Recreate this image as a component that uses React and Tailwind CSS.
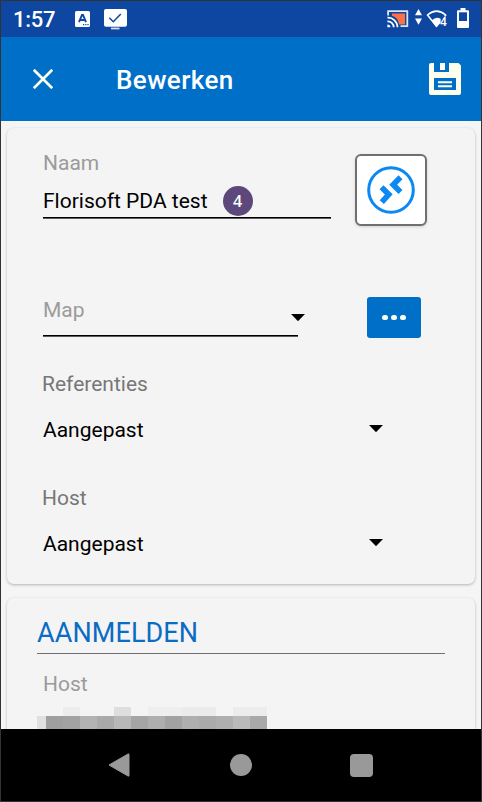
import React from 'react';

const censorTop = [
  [26, 'bg-transparent'], [17, 'bg-[#ececec]'], [34, 'bg-transparent'], [17, 'bg-[#dedede]'],
  [17, 'bg-transparent'], [34, 'bg-[#eeeeee]'], [34, 'bg-[#ebebeb]'], [17, 'bg-transparent'], [34, 'bg-[#ececec]'],
];
const censorBottom = [
  [9, 'bg-[#e0e0e0]'], [17, 'bg-[#9f9f9f]'], [17, 'bg-[#a2a2a2]'], [17, 'bg-[#b3b3b3]'], [17, 'bg-[#aaaaaa]'],
  [17, 'bg-[#b8b8b8]'], [17, 'bg-[#a5a5a5]'], [17, 'bg-[#aeaeae]'], [17, 'bg-[#a2a2a2]'], [17, 'bg-[#afafaf]'],
  [17, 'bg-[#ababab]'], [17, 'bg-[#afafaf]'], [17, 'bg-[#bababa]'], [17, 'bg-[#a9a9a9]'],
];

function Caret({ className }) {
  return (
    <svg className={className} width="14" height="7" viewBox="0 0 14 7">
      <path d="M0 0H14L7 7.2Z" fill="#000" />
    </svg>
  );
}

function Blocks({ cells, className }) {
  return (
    <div className={`flex ${className}`}>
      {cells.map(([w, color], i) => (
        <div key={i} className={color} style={{ width: w }} />
      ))}
    </div>
  );
}

function Underline({ className }) {
  return <div className={`h-[2px] border-b border-[#5a5a5a] bg-black ${className}`} />;
}

function StatusBar() {
  return (
    <div className="flex h-9 shrink-0 bg-[#0d47a1] text-white">
      <span className="ml-3 mt-[7px] w-[62px] text-[22px] leading-6 font-medium tracking-[-0.3px]">1:57</span>
      <svg className="mt-[10px]" width="15" height="16" viewBox="0 0 15 16">
        <rect width="15" height="16" rx="1.5" fill="#fff" />
        <path d="M4 11.2L7 4H8L11 11.2M5.2 9H9.8" fill="none" stroke="#0d47a1" strokeWidth="1.9" />
        <path d="M8 13.7h1.2M10.2 13.7h1.2M12.4 13.7h1.2" stroke="#0d47a1" strokeWidth="1.2" />
      </svg>
      <svg className="ml-[14px] mt-2" width="23" height="21" viewBox="0 0 23 21">
        <rect width="23" height="17.8" rx="2" fill="#fff" />
        <path d="M5.3 8.7L9.3 12.7L16.8 5" fill="none" stroke="#0d47a1" strokeWidth="1.5" />
        <path d="M7 19.5H15.5" stroke="#d5e0f2" strokeWidth="1.8" />
      </svg>
      <svg className="ml-[260px] mt-[9px]" width="22" height="18" viewBox="0 0 22 18">
        <path d="M5 3.5H18V14.5H12C11.5 9.5 9 7.2 5 5.8Z" fill="#ff7043" />
        <path d="M1.1 5.5V1.2H20.3V16.2H13.5" fill="none" stroke="#dce5f3" strokeWidth="1.8" />
        <path d="M.4 7.7A9.5 9.5 0 0 1 10.5 17.3M.4 11.3A6 6 0 0 1 6.7 17.3" fill="none" stroke="#fff" strokeWidth="1.7" />
        <path d="M.4 14.5A3 3 0 0 1 3.4 17.3H.4Z" fill="#fff" />
      </svg>
      <svg className="ml-1.5 mt-2" width="7" height="16" viewBox="0 0 7 16">
        <path d="M3.5 0L7 6.2H0ZM0 9.5H7L3.5 15.8Z" fill="#fff" />
      </svg>
      <div className="relative ml-1 mt-2 h-5 w-[22px]">
        <svg width="22" height="20" viewBox="0 0 22 20">
          <path d="M10.5 17.3L1.5 6Q10.5-1.8 19.7 6L18.6 7.5" fill="none" stroke="#fff" strokeWidth="1.5" />
          <path d="M10.5 18.5L5.6 11.5Q10 7.2 14.6 9.8V13.8Z" fill="#fff" />
        </svg>
        <span className="absolute left-[14px] top-[7px] text-[12px] leading-3 font-medium">4</span>
      </div>
      <svg className="ml-[9px] mt-[7px]" width="12" height="20" viewBox="0 0 12 20">
        <path d="M3.5 0H8.5V2.3H11Q12 2.3 12 3.3V19Q12 20 11 20H1Q0 20 0 19V3.3Q0 2.3 1 2.3H3.5Z" fill="#fff" />
        <path d="M2 4.3H10V13H2Z" fill="#0d47a1" />
      </svg>
    </div>
  );
}

function AppBar() {
  return (
    <div className="flex h-[84px] shrink-0 items-center bg-[#006fc8] text-white">
      <svg className="ml-8" width="20" height="20" viewBox="0 0 20 20">
        <path d="M.8 .8L19.2 19.2M19.2 .8L.8 19.2" stroke="#ffffee" strokeWidth="2.7" />
      </svg>
      <h1 className="ml-[63px] w-[313px] pt-0.5 text-[26px] leading-8 font-medium tracking-[0.4px]">Bewerken</h1>
      <svg width="32" height="32" viewBox="0 0 32 32">
        <path
          fillRule="evenodd"
          d="M2 0H5V9H20V0H29.5L32 2.5V30Q32 32 30 32H2Q0 32 0 30V2Q0 0 2 0ZM5 15V27H27V15Z"
          fill="#ffffee"
        />
        <path d="M11 0H16V7H11Z" fill="#ffffee" />
        <path d="M9 19.3H23M9 23.3H23" stroke="#ffffee" strokeWidth="2" />
      </svg>
    </div>
  );
}

function DetailsCard() {
  return (
    <section className="h-[456px] shrink-0 rounded-[7px] bg-[#f4f4f4] pl-9 text-[21px] leading-6 shadow-[0_1px_3px_rgba(0,0,0,0.27)]">
      <div className="flex h-[169px]">
        <div className="w-[288px] pt-[23px]">
          <div className="text-[#9b9b9b]">Naam</div>
          <div className="mt-[14px] flex h-6">
            <span className="w-[180px]">Florisoft PDA test</span>
            <span className="-mt-[3px] flex h-[30px] w-[30px] shrink-0 items-center justify-center rounded-full bg-[#5c487a] pr-px font-['Open_Sans'] text-[16px] font-semibold text-white">4</span>
          </div>
          <Underline className="mt-1" />
        </div>
        <div className="ml-6 mt-[26px] flex h-[72px] w-[72px] items-center justify-center rounded-md border-2 border-[#707070] bg-white shadow-[0_1px_3px_rgba(0,0,0,0.15)]">
          <svg width="48" height="48" viewBox="0 0 48 48">
            <circle cx="24" cy="24" r="22.3" fill="none" stroke="#0b88f2" strokeWidth="3" />
            <path d="M14.5 21.3L21.8 28.4L14.8 36.2M33.5 11.3L26.2 18.8L33.5 26" fill="none" stroke="#0b88f2" strokeWidth="5.6" />
          </svg>
        </div>
      </div>

      <div className="flex h-[75px] items-start">
        <div className="w-[262px]">
          <div className="flex h-[38px] justify-between">
            <span className="mt-px text-[#9b9b9b]">Map</span>
            <Caret className="mt-[17px]" />
          </div>
          <Underline className="w-[255px]" />
        </div>
        <button className="ml-[62px] flex h-[41px] w-[54px] items-center justify-center gap-[3.5px] rounded-[3px] bg-[#006fc8]">
          <span className="h-[5.5px] w-[5.5px] rounded-full bg-[#ffffee]" />
          <span className="h-[5.5px] w-[5.5px] rounded-full bg-[#ffffee]" />
          <span className="h-[5.5px] w-[5.5px] rounded-full bg-[#ffffee]" />
        </button>
      </div>

      {['Referenties', 'Host'].map((label) => (
        <div key={label} className="h-[114px]">
          <div className="-ml-px text-[#777777]">{label}</div>
          <div className="mt-[22px] flex w-[340px] justify-between">
            <span>Aangepast</span>
            <Caret className="mt-[7px]" />
          </div>
        </div>
      ))}
    </section>
  );
}

function LoginCard() {
  return (
    <section className="mt-[14px] h-[180px] shrink-0 rounded-[7px] bg-[#f4f4f4] pl-[30px] shadow-[0_1px_3px_rgba(0,0,0,0.27)]">
      <h2 className="h-[55px] w-[408px] pt-[19px] text-[27px] leading-8 tracking-[0.1px] text-[#0a6cc2]">AANMELDEN</h2>
      <div className="h-px w-[408px] bg-[#707070]" />
      <div className="ml-1.5 mt-[18px] text-[21px] leading-6 text-[#9b9b9b]">Host</div>
      <Blocks cells={censorTop} className="mt-[11px] h-[9px]" />
      <Blocks cells={censorBottom} className="h-5" />
    </section>
  );
}

function NavBar() {
  return (
    <div className="flex h-[72px] shrink-0 items-center bg-black">
      <svg className="ml-[107px]" width="22" height="24" viewBox="0 0 22 24">
        <path d="M1 12L20 1Q21 .5 21 1.5V22.5Q21 23.5 20 23L1 12Z" fill="#999" stroke="#999" />
      </svg>
      <div className="ml-[100px] h-[22px] w-[22px] rounded-full bg-[#999999]" />
      <div className="ml-[98px] h-[23px] w-[23px] rounded-sm bg-[#999999]" />
    </div>
  );
}

export default function App() {
  return (
    <div className="flex h-[802px] w-[482px] flex-col overflow-hidden border border-[#333333] font-[Roboto,sans-serif] text-black">
      <StatusBar />
      <AppBar />
      <main className="flex h-[608px] shrink-0 flex-col overflow-hidden bg-[#f5f5f5] pl-1.5 pr-[6px] pt-[7px]">
        <DetailsCard />
        <LoginCard />
      </main>
      <NavBar />
    </div>
  );
}
